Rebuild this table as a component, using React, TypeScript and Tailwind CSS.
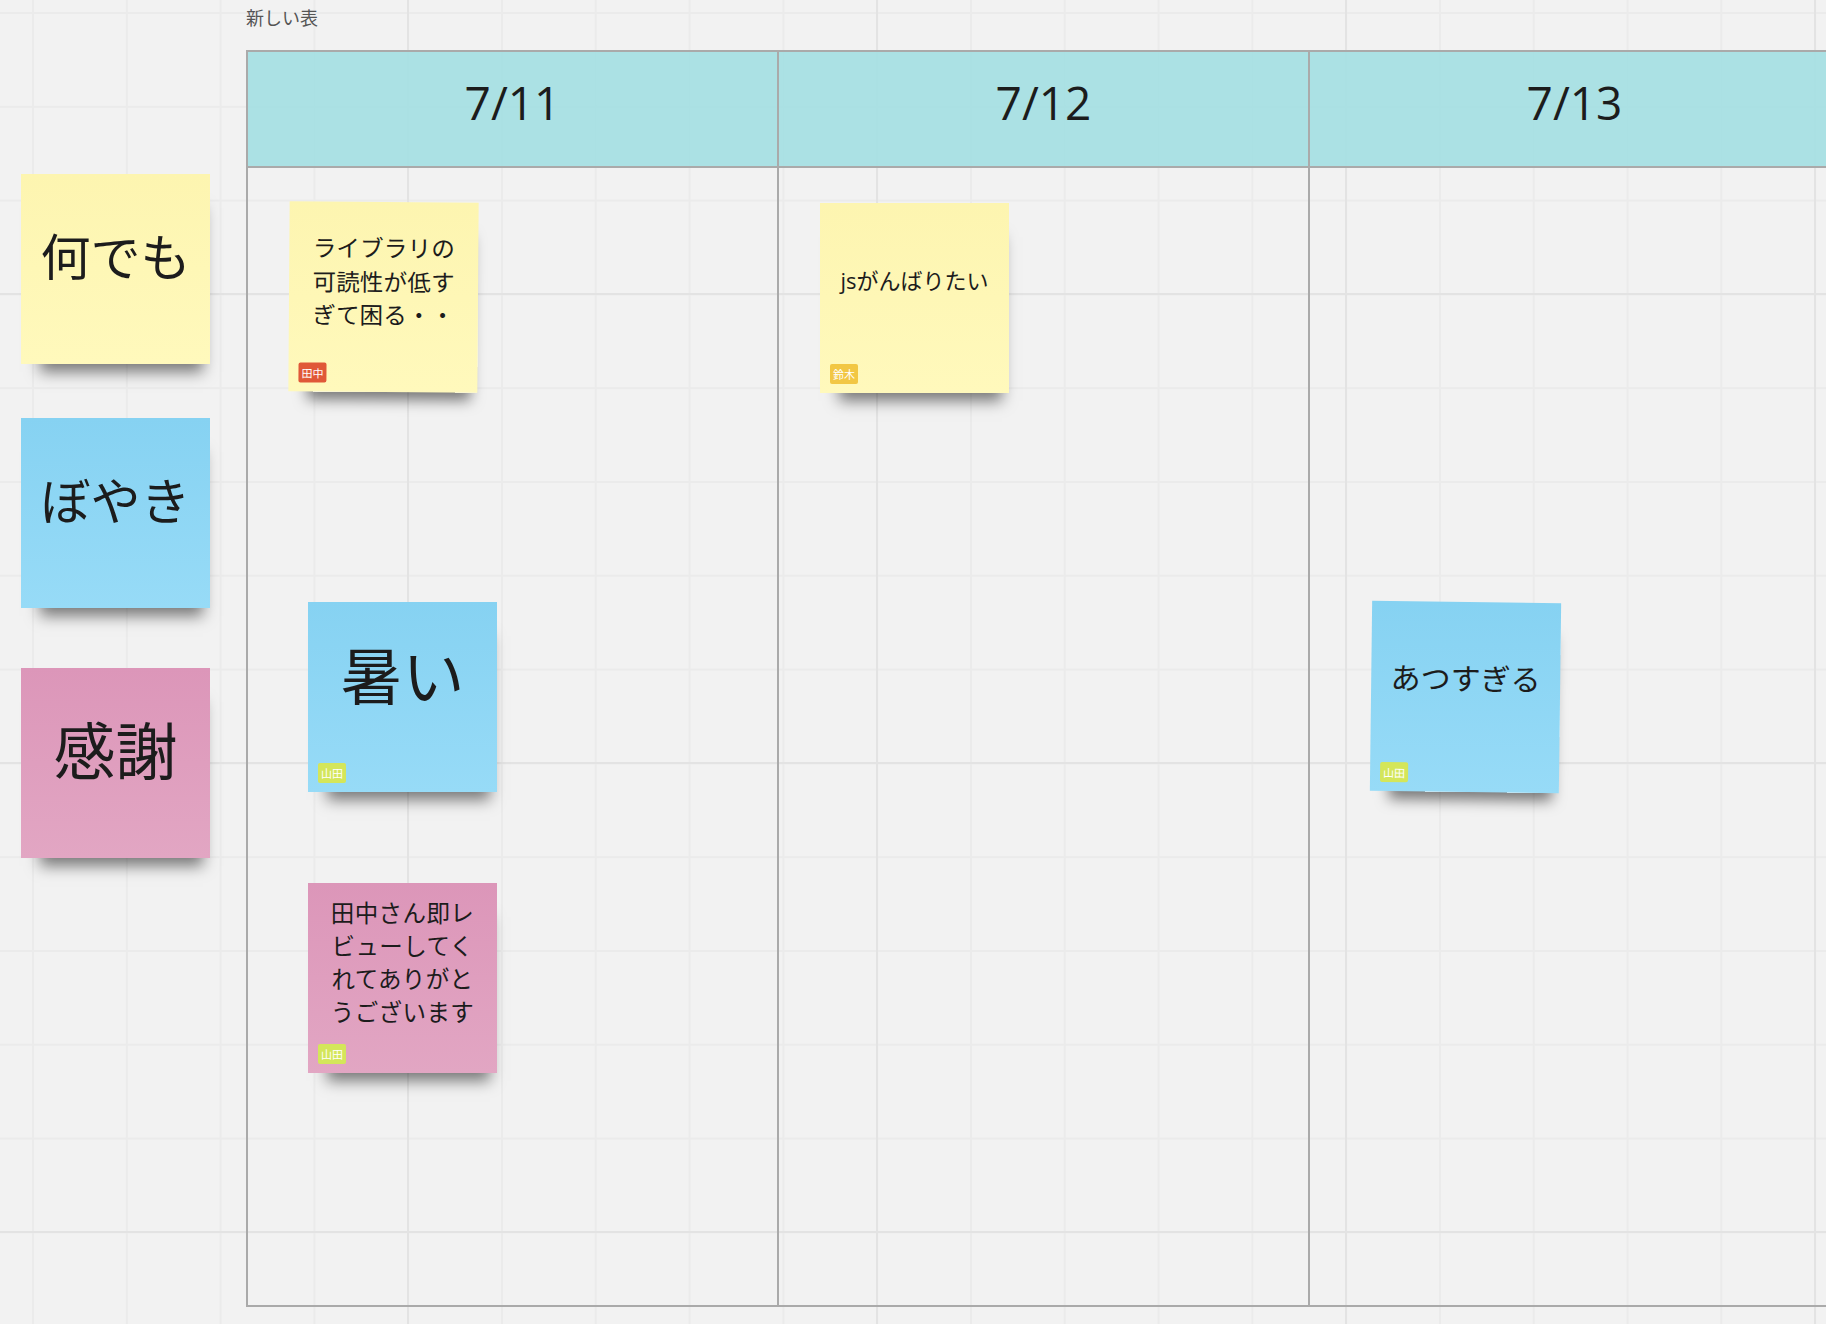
import React from 'react';

type NoteColor = 'yellow' | 'blue' | 'pink';

interface Note {
  left: string;
  top: string;
  color: NoteColor;
  lines: string[];
  text: string;
  pad: string;
  badge?: { name: string; bg: string };
  tilt?: string;
}

const colorClass: Record<NoteColor, string> = {
  yellow: 'bg-linear-to-b from-[#fdf5b0] to-[#fff9bc]',
  blue: 'bg-linear-to-b from-[#86d2f2] to-[#97dbf7]',
  pink: 'bg-linear-to-b from-[#dc96b9] to-[#e2a6c3]',
};

const notes: Note[] = [
  { left: 'left-[21px]', top: 'top-[174px]', color: 'yellow', lines: ['何でも'], text: 'text-[50px] leading-[60px]', pad: 'pb-[25px]' },
  { left: 'left-[21px]', top: 'top-[418px]', color: 'blue', lines: ['ぼやき'], text: 'text-[50px] leading-[60px]', pad: 'pb-[25px]' },
  { left: 'left-[21px]', top: 'top-[668px]', color: 'pink', lines: ['感謝'], text: 'text-[62px] leading-[72px]', pad: 'pb-[25px]' },
  {
    left: 'left-[289px]',
    top: 'top-[202px]',
    color: 'yellow',
    lines: ['ライブラリの', '可読性が低す', 'ぎて困る・・'],
    text: 'text-[23.5px] leading-[33.5px] tracking-[0.2px]',
    pad: 'pb-[29px]',
    badge: { name: '田中', bg: 'bg-[#e05838]' },
    tilt: 'rotate-[0.4deg]',
  },
  {
    left: 'left-[820px]',
    top: 'top-[203px]',
    color: 'yellow',
    lines: ['jsがんばりたい'],
    text: 'text-[22px] leading-[30px]',
    pad: 'pb-[36px]',
    badge: { name: '鈴木', bg: 'bg-[#f2c744]' },
  },
  {
    left: 'left-[308px]',
    top: 'top-[602px]',
    color: 'blue',
    lines: ['暑い'],
    text: 'text-[62px] leading-[72px]',
    pad: 'pb-[43px]',
    badge: { name: '山田', bg: 'bg-[#d4e65a]' },
  },
  {
    left: 'left-[308px]',
    top: 'top-[883px]',
    color: 'pink',
    lines: ['田中さん即レ', 'ビューしてく', 'れてありがと', 'うございます'],
    text: 'text-[23.5px] leading-[33px] tracking-[0.4px]',
    pad: 'pb-[31px]',
    badge: { name: '山田', bg: 'bg-[#d4e65a]' },
  },
  {
    left: 'left-[1371px]',
    top: 'top-[602px]',
    color: 'blue',
    lines: ['あつすぎる'],
    text: 'text-[30px] leading-[38px]',
    pad: 'pb-[37px]',
    badge: { name: '山田', bg: 'bg-[#d4e65a]' },
    tilt: 'rotate-[0.7deg]',
  },
];

const dates = ['7/11', '7/12', '7/13'];

const StickyNote: React.FC<{ note: Note }> = ({ note }) => (
  <div
    className={`absolute ${note.left} ${note.top} ${note.tilt ?? ''} w-[189px] h-[190px] ${colorClass[note.color]} shadow-[6px_21px_14px_-13px_rgba(0,0,0,0.5)]`}
  >
    <div className={`flex h-full w-full items-center justify-center ${note.pad}`}>
      <div className={`text-center text-[#1c1c1c] ${note.text}`}>
        {note.lines.map((line) => (
          <div key={line} className="whitespace-nowrap">
            {line}
          </div>
        ))}
      </div>
    </div>
    {note.badge && (
      <span
        className={`absolute left-[10px] bottom-[9px] flex h-[20px] w-[28px] items-center justify-center rounded-[2px] text-[11px] leading-none text-white ${note.badge.bg}`}
      >
        {note.badge.name}
      </span>
    )}
  </div>
);

export default function App() {
  return (
    <div
      className="relative h-[1324px] w-full overflow-hidden bg-[#f2f2f2] bg-[linear-gradient(to_right,#e3e3e3_2px,transparent_2px),linear-gradient(to_bottom,#e3e3e3_2px,transparent_2px),linear-gradient(to_right,#ebebeb_2px,transparent_2px),linear-gradient(to_bottom,#ebebeb_2px,transparent_2px)] bg-[size:469px_469px,469px_469px,93.8px_93.8px,93.8px_93.8px] bg-[position:407px_293px,407px_293px,32px_12px,32px_12px] font-['Open_Sans','Noto_Sans_CJK_JP',sans-serif]"
    >
      <div className="pl-[246px] pt-[5px]">
        <div className="text-[18px] leading-[24px] text-[#555] font-['Noto_Sans_CJK_JP',sans-serif]">新しい表</div>

        <div className="mt-[21px] flex h-[1257px] w-[1600px] border-y-2 border-l-2 border-[#aaaaaa]">
          {dates.map((d) => (
            <div key={d} className="flex w-[531px] shrink-0 flex-col border-r-2 border-[#aaaaaa]">
              <div className="flex h-[116px] items-center justify-center border-b-2 border-[#aaaaaa] bg-[#a3dfe2]/90 pb-[14px] text-[46px] text-[#1c1c1c]">
                {d}
              </div>
              <div className="flex-1" />
            </div>
          ))}
        </div>
      </div>

      {notes.map((n, i) => (
        <StickyNote key={i} note={n} />
      ))}
    </div>
  );
}
